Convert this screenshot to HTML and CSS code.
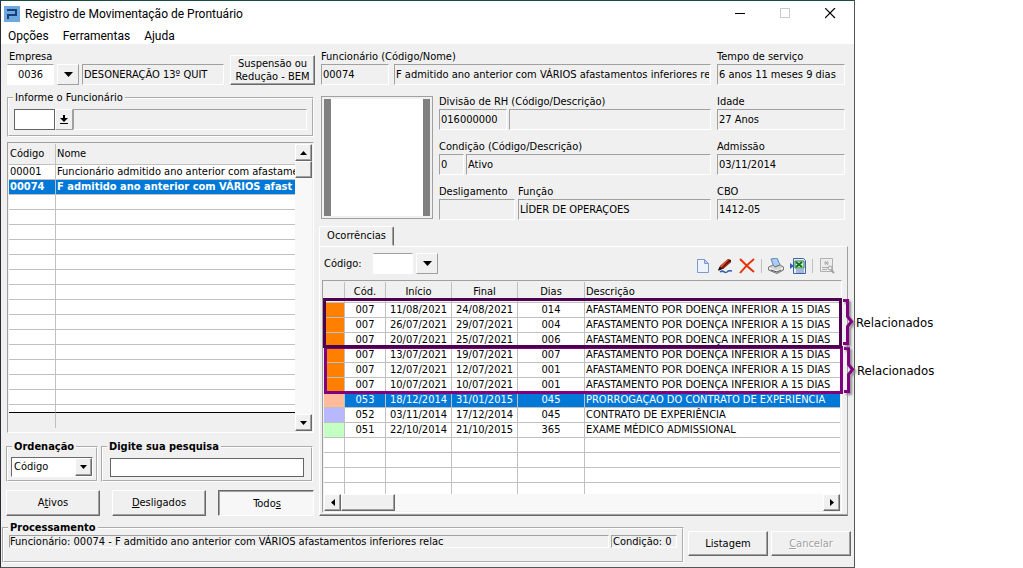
FILE: index.html
```
<!DOCTYPE html>
<html lang="pt-BR">
<head>
    <meta charset="UTF-8">
    <meta name="viewport" content="width=device-width, initial-scale=1.0">
    <title>Registro de Movimentação de Prontuário</title>
    <link rel="stylesheet" href="styles.css">
</head>
<body>
    <div class="window">
        <header class="titlebar">
            <svg class="logo" width="16" height="16" viewBox="0 0 16 16">
                <rect width="16" height="16" fill="#6fa8dc"/>
                <path d="M3 4h9v5H4v4" fill="none" stroke="#173f7a" stroke-width="2"/>
            </svg>
            <h1>Registro de Movimentação de Prontuário</h1>
            <div class="window-buttons">
                <button aria-label="Minimizar"><svg width="11" height="11"><path d="M0 5.500h10" stroke="#000"/></svg></button>
                <button aria-label="Maximizar" disabled><svg width="11" height="11"><path d="M.5.5h9v9h-9z" fill="none" stroke="#c8c8c8"/></svg></button>
                <button aria-label="Fechar"><svg width="11" height="11"><path d="M0 0l10 10M10 0L0 10" stroke="#000" stroke-width="1.200"/></svg></button>
            </div>
        </header>
        <nav class="menu">
            <button>Opções</button>
            <button>Ferramentas</button>
            <button>Ajuda</button>
        </nav>

        <main class="content">
            <section class="left">
                <div class="company">
                    <div class="company-code">
                        <label for="empresa">Empresa</label>
                        <div class="line">
                            <input class="edit center" id="empresa" value="0036">
                            <button class="drop" aria-label="Escolher empresa"><svg width="9" height="5"><path d="M0 0h9L4.500 5z"/></svg></button>
                            <input class="field" aria-label="Nome da empresa" value="DESONERAÇÃO 13º QUIT" readonly>
                        </div>
                    </div>
                    <button class="btn bem">Suspensão ou<br>Redução - BEM</button>
                </div>

                <fieldset class="group employee">
                    <legend>Informe o Funcionário</legend>
                    <div class="line">
                        <input class="edit boxed" aria-label="Código do funcionário">
                        <button class="drop small" aria-label="Buscar funcionário"><svg width="8" height="9"><path d="M3 0h2v3h3L4 7 0 3h3zM0 8h8v1H0z"/></svg></button>
                        <input class="field" aria-label="Nome do funcionário" readonly>
                    </div>
                </fieldset>

                <div class="list">
                    <div class="list-table">
                        <table class="grid people">
                            <colgroup><col class="c-code"><col></colgroup>
                            <thead><tr><th>Código</th><th>Nome</th></tr></thead>
                            <tbody>
                                <tr><td>00001</td><td>Funcionário admitido ano anterior com afastamen</td></tr>
                                <tr class="current"><td>00074</td><td>F admitido ano anterior com VÁRIOS afast</td></tr>
                                <tr><td></td><td></td></tr>
                                <tr><td></td><td></td></tr>
                                <tr><td></td><td></td></tr>
                                <tr><td></td><td></td></tr>
                                <tr><td></td><td></td></tr>
                                <tr><td></td><td></td></tr>
                                <tr><td></td><td></td></tr>
                                <tr><td></td><td></td></tr>
                                <tr><td></td><td></td></tr>
                                <tr><td></td><td></td></tr>
                                <tr><td></td><td></td></tr>
                                <tr><td></td><td></td></tr>
                                <tr><td></td><td></td></tr>
                                <tr><td></td><td></td></tr>
                                <tr class="part"><td></td><td></td></tr>
                            </tbody>
                            <tfoot><tr><td></td><td></td></tr></tfoot>
                        </table>
                    </div>
                    <div class="scroll-v">
                        <button aria-label="Subir"><svg width="7" height="4"><path d="M0 4h7L3.500 0z"/></svg></button>
                        <span class="thumb"></span>
                        <button class="end" aria-label="Descer"><svg width="7" height="4"><path d="M0 0h7L3.500 4z"/></svg></button>
                    </div>
                </div>

                <div class="search">
                    <fieldset class="group order">
                        <legend>Ordenação</legend>
                        <div class="combo">
                            <select aria-label="Ordenação"><option>Código</option><option>Nome</option></select>
                            <span class="combo-arrow"><svg width="7" height="4"><path d="M0 0h7L3.500 4z"/></svg></span>
                        </div>
                    </fieldset>
                    <fieldset class="group query">
                        <legend>Digite sua pesquisa</legend>
                        <input class="edit boxed" aria-label="Digite sua pesquisa">
                    </fieldset>
                </div>

                <div class="filters">
                    <button class="btn">A<u>t</u>ivos</button>
                    <button class="btn"><u>D</u>esligados</button>
                    <button class="btn pressed">Todo<u>s</u></button>
                </div>
            </section>

            <section class="right">
                <div class="person">
                    <div class="cell name">
                        <label for="func">Funcionário (Código/Nome)</label>
                        <div class="line wide">
                            <input class="field w68" id="func" value="00074" readonly>
                            <input class="field" aria-label="Nome" value="F admitido ano anterior com VÁRIOS afastamentos inferiores rela" readonly>
                        </div>
                    </div>
                    <div class="cell">
                        <label for="tempo">Tempo de serviço</label>
                        <input class="field" id="tempo" value="6 anos 11 meses 9 dias" readonly>
                    </div>

                    <div class="photo"><div></div></div>
                    <div class="cell">
                        <label for="divisao">Divisão de RH (Código/Descrição)</label>
                        <div class="line tight">
                            <input class="field w68" id="divisao" value="016000000" readonly>
                            <input class="field" aria-label="Descrição da divisão" readonly>
                        </div>
                    </div>
                    <div class="cell">
                        <label for="idade">Idade</label>
                        <input class="field" id="idade" value="27 Anos" readonly>
                    </div>
                    <div class="cell">
                        <label for="condicao">Condição (Código/Descrição)</label>
                        <div class="line tight">
                            <input class="field w25" id="condicao" value="0" readonly>
                            <input class="field" aria-label="Descrição da condição" value="Ativo" readonly>
                        </div>
                    </div>
                    <div class="cell">
                        <label for="admissao">Admissão</label>
                        <input class="field" id="admissao" value="03/11/2014" readonly>
                    </div>
                    <div class="pair">
                        <div class="cell w76">
                            <label for="deslig">Desligamento</label>
                            <input class="field" id="deslig" readonly>
                        </div>
                        <div class="cell">
                            <label for="funcao">Função</label>
                            <input class="field" id="funcao" value="LÍDER DE OPERAÇOES" readonly>
                        </div>
                    </div>
                    <div class="cell">
                        <label for="cbo">CBO</label>
                        <input class="field" id="cbo" value="1412-05" readonly>
                    </div>
                </div>

                <div class="tabs"><button class="tab">Ocorrências</button></div>
                <div class="panel">
                    <div class="panel-top">
                        <label for="codigo">Código:</label>
                        <input class="edit" id="codigo">
                        <button class="drop" aria-label="Escolher código"><svg width="9" height="5"><path d="M0 0h9L4.500 5z"/></svg></button>
                        <div class="toolbar">
                            <button aria-label="Novo">
                                <svg width="16" height="16"><path d="M2.500 1.500h7l4 4v9h-11z" fill="#eef4ff" stroke="#7d9bc8"/><path d="M9.500 1.500v4h4z" fill="#b9cdee" stroke="#7d9bc8"/></svg>
                            </button>
                            <button aria-label="Editar">
                                <svg width="16" height="16"><path d="M1 12l2-4 8-7 3 1v2l-8 7z" fill="#3a0f08"/><path d="M3 8l8-7 1 1-8 8z" fill="#e2532a"/><path d="M5 10l8-7 1 1-8 7z" fill="#a82812"/><path d="M1 13l2-4 2 2z" fill="#111"/><path d="M3 14c4-3 4 2 7 0 2-2 3-1 5-1" fill="none" stroke="#2f62ad" stroke-width="1.500"/></svg>
                            </button>
                            <button aria-label="Excluir">
                                <svg width="16" height="16"><path d="M1 1c4 4 9 9 14 13M15 1C10 5 5 10 1 15" fill="none" stroke="#e8320a" stroke-width="2"/></svg>
                            </button>
                            <span class="sep"></span>
                            <button aria-label="Imprimir">
                                <svg width="16" height="16"><path d="M3 1l6-1 3 7-6 2z" fill="#a9cdf5" stroke="#5c87bd"/><path d="M.5 9L5 7l2 2 5-2 3.500 2v3L9 15.500.5 12z" fill="#d2d2d2" stroke="#777"/><path d="M1 10l8 3 6-3" fill="none" stroke="#fff"/><path d="M3 12l6 2 4-2" fill="none" stroke="#555"/></svg>
                            </button>
                            <button aria-label="Exportar">
                                <svg width="16" height="16"><path d="M3.500.5h10l2 2v13h-12z" fill="#e8efff" stroke="#3f62a8"/><path d="M5 3h9v7H5z" fill="#d4edce" stroke="#27803b"/><path d="M6 4l6 5M12 4L6 9" stroke="#16702c" stroke-width="2"/><path d="M0 5l4 3-4 3z" fill="#2b62bc"/><path d="M6 12h8M6 14h8" stroke="#6080b8"/></svg>
                            </button>
                            <span class="sep"></span>
                            <button aria-label="Visualizar" disabled>
                                <svg width="16" height="16"><path d="M1.500.5h12v13h-12z" fill="#eee" stroke="#b0b0b0"/><path d="M5 5h5M6 3l3 4M9 3L6 7M3 9.500h7M3 11.500h5" fill="none" stroke="#aaa"/><circle cx="11" cy="10" r="2" fill="#eee" stroke="#a0a0a0"/><path d="M12 12l3 3" stroke="#a0a0a0" stroke-width="2"/></svg>
                            </button>
                        </div>
                    </div>

                    <div class="events">
                        <table class="grid">
                            <colgroup><col class="c-mark"><col class="c-cod"><col class="c-date"><col class="c-date"><col class="c-days"><col></colgroup>
                            <thead><tr><th></th><th>Cód.</th><th>Início</th><th>Final</th><th>Dias</th><th>Descrição</th></tr></thead>
                            <tbody>
                                <tr><td class="orange"></td><td>007</td><td>11/08/2021</td><td>24/08/2021</td><td>014</td><td>AFASTAMENTO POR DOENÇA INFERIOR A 15 DIAS</td></tr>
                                <tr><td class="orange"></td><td>007</td><td>26/07/2021</td><td>29/07/2021</td><td>004</td><td>AFASTAMENTO POR DOENÇA INFERIOR A 15 DIAS</td></tr>
                                <tr><td class="orange"></td><td>007</td><td>20/07/2021</td><td>25/07/2021</td><td>006</td><td>AFASTAMENTO POR DOENÇA INFERIOR A 15 DIAS</td></tr>
                                <tr><td class="orange"></td><td>007</td><td>13/07/2021</td><td>19/07/2021</td><td>007</td><td>AFASTAMENTO POR DOENÇA INFERIOR A 15 DIAS</td></tr>
                                <tr><td class="orange"></td><td>007</td><td>12/07/2021</td><td>12/07/2021</td><td>001</td><td>AFASTAMENTO POR DOENÇA INFERIOR A 15 DIAS</td></tr>
                                <tr><td class="orange"></td><td>007</td><td>10/07/2021</td><td>10/07/2021</td><td>001</td><td>AFASTAMENTO POR DOENÇA INFERIOR A 15 DIAS</td></tr>
                                <tr class="current"><td class="salmon"></td><td>053</td><td>18/12/2014</td><td>31/01/2015</td><td>045</td><td>PRORROGAÇÃO DO CONTRATO DE EXPERIÊNCIA</td></tr>
                                <tr><td class="lilac"></td><td>052</td><td>03/11/2014</td><td>17/12/2014</td><td>045</td><td>CONTRATO DE EXPERIÊNCIA</td></tr>
                                <tr><td class="green"></td><td>051</td><td>22/10/2014</td><td>21/10/2015</td><td>365</td><td>EXAME MÉDICO ADMISSIONAL</td></tr>
                                <tr><td></td><td></td><td></td><td></td><td></td><td></td></tr>
                                <tr><td></td><td></td><td></td><td></td><td></td><td></td></tr>
                                <tr><td></td><td></td><td></td><td></td><td></td><td></td></tr>
                                <tr class="part"><td></td><td></td><td></td><td></td><td></td><td></td></tr>
                            </tbody>
                        </table>
                        <div class="scroll-h">
                            <button aria-label="Esquerda"><svg width="4" height="7"><path d="M4 0v7L0 3.500z"/></svg></button>
                            <span class="thumb"></span>
                            <button class="end" aria-label="Direita"><svg width="4" height="7"><path d="M0 0v7l4-3.500z"/></svg></button>
                        </div>

                        <!-- grupos de ocorrências relacionadas -->
                        <div class="related second">
                            <div class="note">
                                <svg width="12" height="47"><path d="M0 1.500h4.500v16l4 5-4 5v17H0" fill="none" stroke="#800080" stroke-width="3"/></svg>
                                <span>Relacionados</span>
                            </div>
                        </div>
                        <div class="related first">
                            <div class="note">
                                <svg width="12" height="47"><path d="M0 1.500h4.500v16l4 5-4 5v17H0" fill="none" stroke="#800080" stroke-width="3"/></svg>
                                <span>Relacionados</span>
                            </div>
                        </div>
                    </div>
                </div>
            </section>
        </main>

        <footer class="bottom">
            <fieldset class="group process">
                <legend>Processamento</legend>
                <div class="status">
                    <span>Funcionário: 00074 - F admitido ano anterior com VÁRIOS afastamentos inferiores relac</span>
                    <span class="cond">Condição: 0</span>
                </div>
            </fieldset>
            <button class="btn">Listagem</button>
            <button class="btn" disabled><u>C</u>ancelar</button>
        </footer>
    </div>
</body>
</html>
```
FILE: styles.css
```
* {
    box-sizing: border-box;
}
body {
    margin: 0;
    display: grid;
    grid-template-columns: minmax(0, 1fr) 168px;
    background: #fff;
    color: #000;
    font: 11px/14px "DejaVu Sans Condensed", "Noto Sans", sans-serif;
}
button, input, select {
    font: inherit;
    color: inherit;
    margin: 0;
    padding: 0;
    border-radius: 0;
    min-width: 0;
}
button {
    background: #f0f0f0;
    border: 0;
}
svg {
    display: block;
    flex: none;
}
.window {
    display: flex;
    flex-direction: column;
    min-height: 100vh;
    background: #f0f0f0;
    border: 1px solid #555;
    border-top-color: #1d4d42;
    border-left-color: #2b2b33;
}

/* title and menu */
.titlebar {
    display: flex;
    align-items: center;
    height: 25px;
    padding: 0 18px 0 3px;
    background: #fff;
}
h1 {
    flex: 1;
    margin: 0 0 0 5px;
    font: 12px/16px Roboto, "Noto Sans", sans-serif;
}
.window-buttons {
    display: flex;
    gap: 34px;
}
.window-buttons button {
    background: none;
}
.menu {
    display: flex;
    gap: 14px;
    height: 18px;
    padding: 1px 7px 0;
    background: #fff;
}
.menu button {
    background: none;
    font: 12px/16px Roboto, "Noto Sans", sans-serif;
}

/* common controls */
label {
    display: block;
    height: 14px;
    white-space: nowrap;
}
.line {
    display: flex;
    gap: 4px;
}
.tight {
    gap: 2px;
}
.wide {
    gap: 5px;
}
.field {
    display: block;
    width: 100%;
    height: 21px;
    padding: 0 1px;
    background: #f0f0f0;
    border: 1px solid;
    border-color: #a0a0a0 #fff #fff #a0a0a0;
}
.line .field {
    flex: 1;
}
.line .w68 {
    flex: 0 0 68px;
}
.line .w25 {
    flex: 0 0 25px;
}
.edit {
    height: 21px;
    padding: 0 2px;
    background: #fff;
    border: 1px solid;
    border-color: #a0a0a0 #fff #fff #fff;
}
.boxed {
    border-color: #646464;
}
.center {
    text-align: center;
}
.drop {
    display: flex;
    flex: 0 0 22px;
    align-items: center;
    justify-content: center;
    height: 21px;
    border: 1px solid;
    border-color: #fff #a0a0a0 #a0a0a0 #fff;
}
.drop.small {
    flex-basis: 18px;
}
.btn {
    background: #f0f0f0;
    border: 1px solid;
    border-color: #fff #696969 #696969 #fff;
    box-shadow: inset -1px -1px #a0a0a0;
}
.btn:disabled {
    color: #a0a0a0;
    text-shadow: 1px 1px #fff;
}
.pressed {
    padding: 2px 0 0 2px;
    background: #f7f7f7;
    border-color: #696969 #fff #fff #696969;
    box-shadow: inset 1px 1px #a0a0a0;
}
.group {
    min-width: 0;
    margin: 0;
    padding: 0;
    border: 2px groove #fff;
}
legend {
    height: 14px;
    margin-left: 4px;
    padding: 0 2px;
}

.content {
    display: grid;
    grid-template-columns: minmax(0, 309fr) minmax(0, 529fr);
    gap: 4px;
    padding: 6px 6px 0 5px;
}

/* left side */
.left {
    display: flex;
    flex-direction: column;
}
.company {
    display: flex;
    gap: 6px;
    align-items: flex-end;
}
.company-code {
    flex: 1;
    min-width: 0;
    padding-left: 1px;
}
.company label {
    padding-left: 2px;
}
.company .edit {
    width: 47px;
}
.company .line {
    gap: 3px;
}
.bem {
    flex: 0 0 85px;
    height: 30px;
    line-height: 13px;
}
.employee {
    height: 46px;
    margin: 6px 1px 0;
}
.employee .line {
    gap: 0;
    padding: 4px 5px 0;
}
.employee .edit {
    width: 41px;
}
.list {
    display: flex;
    height: 291px;
    margin: 5px 1px 0;
    padding: 1px;
    border: 1px solid;
    border-color: #a0a0a0 #fff #fff #a0a0a0;
}
.list-table {
    flex: 1;
    min-width: 0;
    overflow: hidden;
}
.grid {
    width: 100%;
    table-layout: fixed;
    border-collapse: separate;
    border-spacing: 0;
}
.grid th {
    height: 21px;
    padding: 0 1px;
    font-weight: normal;
    text-align: left;
    border: 1px solid silver;
    border-width: 0 1px 1px 0;
}
.grid td {
    height: 15px;
    padding: 0 1px;
    line-height: 14px;
    background: #fff;
    border: 1px solid silver;
    border-width: 0 1px 1px 0;
    overflow: hidden;
    white-space: nowrap;
}
.grid th:last-child, .grid td:last-child {
    border-right: 0;
}
.grid .current td {
    background: #0078d7;
    color: #fff;
}
.people .current {
    font-weight: bold;
}
.people .part td {
    height: 8px;
    border-bottom-color: #000;
}
.people tfoot td {
    background: #f0f0f0;
    border-bottom: 0;
}
.c-code {
    width: 47px;
}
.scroll-v, .scroll-h {
    display: flex;
    background: #f8f8f8;
}
.scroll-v {
    flex: 0 0 17px;
    flex-direction: column;
}
.scroll-v button, .scroll-h button, .thumb, .combo-arrow {
    display: flex;
    flex: 0 0 17px;
    align-items: center;
    justify-content: center;
    background: #f0f0f0;
    border: 1px solid;
    border-color: #fff #696969 #696969 #fff;
    box-shadow: inset -1px -1px #a0a0a0;
}
.scroll-v .end {
    margin-top: auto;
}
.scroll-h .end {
    margin-left: auto;
}
.search {
    display: flex;
    gap: 3px;
    margin: 7px 2px 0 0;
}
.search .group {
    height: 42px;
    padding: 0 3px;
}
.search legend {
    margin-left: 1px;
    font-weight: bold;
}
.order {
    flex: 0 0 92px;
}
.query {
    flex: 1;
}
.query .edit {
    display: block;
    width: calc(100% - 8px);
    height: 19px;
    margin: 4px 4px 0;
}
.combo {
    display: flex;
    height: 20px;
    margin-top: 3px;
    background: #fff;
    border: 1px solid;
    border-color: #696969 #fff #fff #696969;
}
.combo select {
    flex: 1;
    padding: 0 2px;
    border: 0;
    background: #fff;
    appearance: none;
}
.filters {
    display: flex;
    gap: 12px;
    margin: 8px 1px 0 0;
}
.filters .btn {
    flex: 1;
    height: 26px;
}

/* right side */
.person {
    display: grid;
    grid-template-columns: 112px minmax(0, 272fr) minmax(0, 128fr);
    column-gap: 6px;
    padding: 0 3px 0 2px;
}
.name {
    grid-column: 1 / 3;
}
.person .cell {
    min-width: 0;
}
.photo {
    grid-row: 2 / 5;
    display: flex;
    height: 123px;
    margin-top: 11px;
    padding: 2px;
    border: 1px solid #a0a0a0;
}
.photo div {
    flex: 1;
    background: #fff;
    border: 0 solid #808080;
    border-width: 0 7px;
}
.person .cell:nth-child(n + 4) {
    padding-top: 10px;
}
.person .pair {
    display: flex;
    gap: 3px;
    padding-top: 10px;
}
.person .pair .cell {
    flex: 1;
    padding-top: 0;
}
.person .pair .w76 {
    flex: 0 0 76px;
}
.tabs {
    display: flex;
    margin-top: 6px;
}
.tab {
    width: 75px;
    height: 20px;
    border: 1px solid;
    border-color: #fff #696969 #f0f0f0 #fff;
    border-radius: 2px 2px 0 0;
    box-shadow: inset -1px 0 #a0a0a0;
}
.panel {
    padding: 6px 5px 2px 2px;
    border: 1px solid;
    border-color: #fff #a0a0a0 #696969 #fff;
    box-shadow: inset 0 -1px #a0a0a0;
}
.panel-top {
    display: flex;
    align-items: center;
    height: 21px;
    margin-left: 2px;
}
.panel-top label {
    width: 49px;
}
.panel-top .edit {
    width: 40px;
    margin-right: 3px;
}
.toolbar {
    display: flex;
    align-items: center;
    gap: 6px;
    margin: 4px 7px 0 auto;
}
.sep {
    width: 1px;
    height: 14px;
    background: #c0c0c0;
}
.events {
    position: relative;
    margin-top: 6px;
    padding: 1px;
    border: 1px solid;
    border-color: #a0a0a0 #fff #fff #a0a0a0;
}
.events th, .events td {
    text-align: center;
}
.events th:last-child, .events td:last-child {
    text-align: left;
}
.events .part td {
    height: 11px;
    border-bottom: 0;
}
.c-mark {
    width: 21px;
}
.c-cod {
    width: 41px;
}
.c-date {
    width: 66px;
}
.c-days {
    width: 67px;
}
.grid .orange {
    background: #ff8000;
}
.grid .current .salmon {
    background: #ffbb9b;
}
.grid .lilac {
    background: #b8b8ff;
}
.grid .green {
    background: #c4ffc4;
}
.scroll-h {
    height: 17px;
}
.scroll-h .thumb {
    flex-basis: 54px;
}
.related {
    position: absolute;
    left: 0;
    right: -1px;
    border: 3px solid #800080;
}
.first {
    top: 17px;
    height: 50px;
    border-color: #4b0050;
}
.second {
    top: 65px;
    height: 48px;
    left: 1px;
    right: -2px;
}
.note {
    position: absolute;
    left: 100%;
    top: -2px;
    display: flex;
    gap: 1px;
    align-items: center;
    padding-left: 4px;
    font-size: 13px;
}
.note svg {
    filter: drop-shadow(2px 2px 1px #888);
}

/* bottom bar */
.bottom {
    display: flex;
    gap: 3px;
    padding: 5px 3px 4px 1px;
}
.process {
    flex: 1;
    height: 42px;
    margin-right: 1px;
}
.process legend {
    font-weight: bold;
}
.status {
    display: flex;
    gap: 2px;
    padding: 0 5px;
}
.status span {
    flex: 1;
    height: 13px;
    line-height: 12px;
    border: 1px solid;
    border-color: #a0a0a0 #fff #fff #a0a0a0;
    white-space: nowrap;
}
.status .cond {
    flex: 0 0 66px;
    padding-left: 1px;
}
.bottom .btn {
    flex: 0 0 80px;
    height: 25px;
    margin-top: 10px;
}
```
